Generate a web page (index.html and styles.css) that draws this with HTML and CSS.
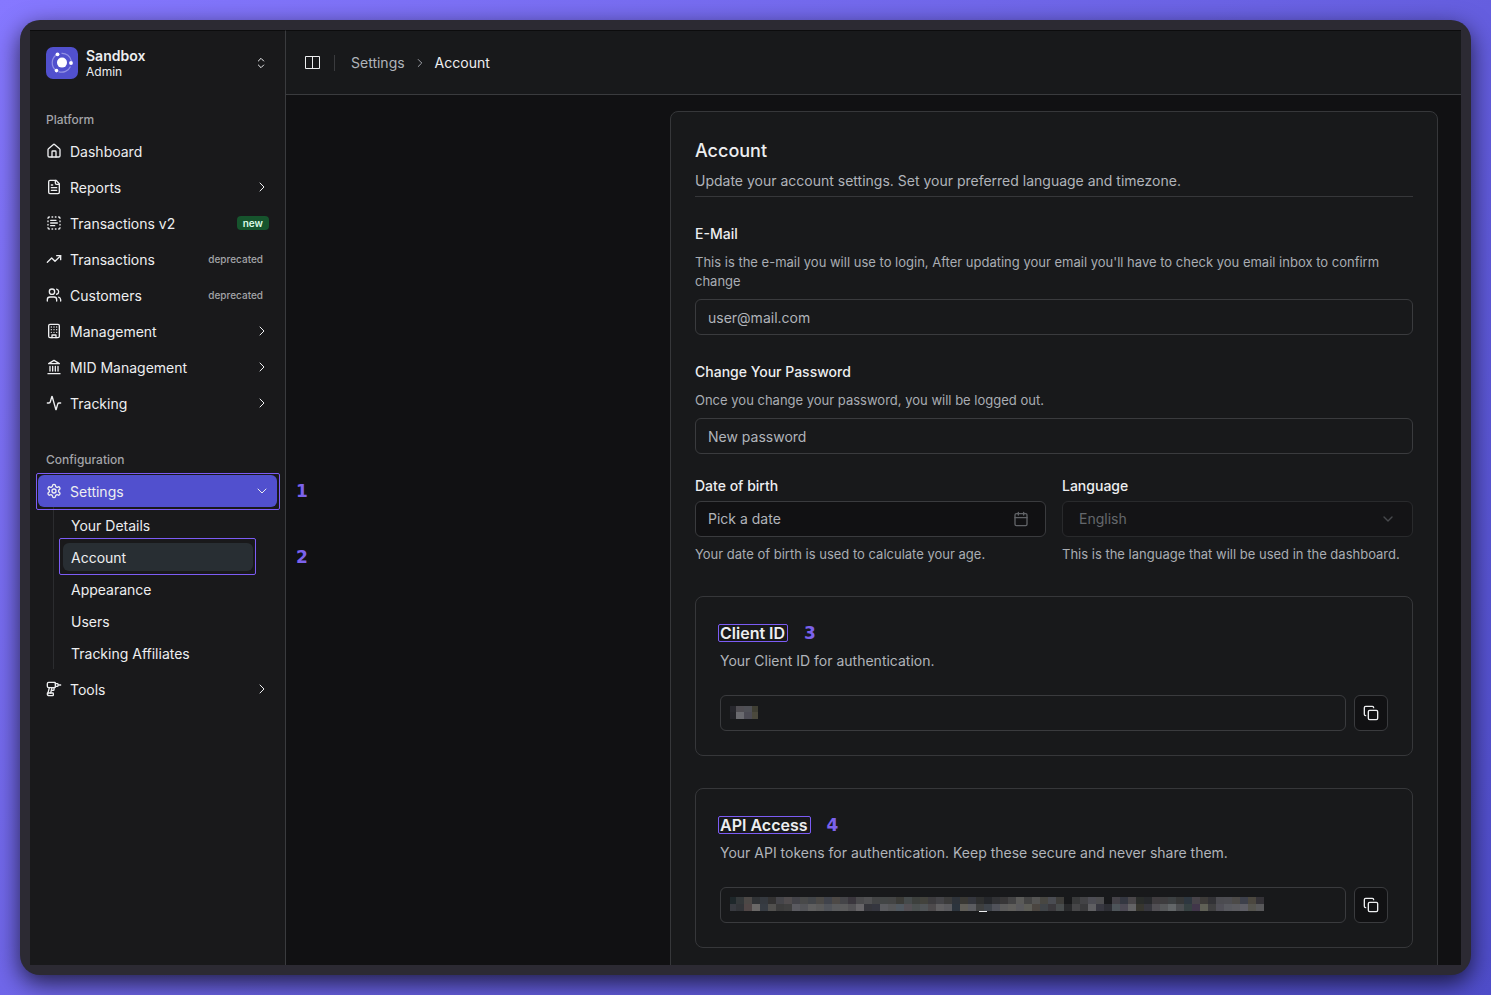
FILE: index.html
```
<!DOCTYPE html>
<html lang="en">
<head>
  <meta charset="UTF-8">
  <title>Account settings</title>
  <link rel="stylesheet" href="styles.css">
</head>
<body>

<div class="window">
  <aside class="sidebar">
    <button type="button" class="team">
      <svg class="logo" viewBox="0 0 32 32">
        <rect width="32" height="32" rx="7" fill="#5150ce"/>
        <g fill="none" stroke="#9291e4" stroke-width="1.2">
          <path d="M15.5 6.3A9.6 9.6 0 0 1 25.4 14"/>
          <path d="M9.8 8.2A9.6 9.6 0 0 0 9.4 22.8"/>
          <path d="M12.5 24.6A9.6 9.6 0 0 0 24.5 19.5"/>
        </g>
        <g fill="#fff">
          <circle cx="16" cy="15.6" r="5"/>
          <circle cx="11.5" cy="7.3" r="1.9"/>
          <circle cx="25" cy="16" r="1.9"/>
          <circle cx="10.5" cy="23.6" r="1.8"/>
        </g>
      </svg>
      <span class="team-text">
        <strong>Sandbox</strong>
        <small>Admin</small>
      </span>
      <svg class="icon chevron" viewBox="0 0 24 24"><path d="m8 9 4-4 4 4M8 15l4 4 4-4"/></svg>
    </button>

    <nav class="group">
      <h2>Platform</h2>
      <ul class="menu">
        <li><a href="#" class="item">
          <svg class="icon" viewBox="0 0 24 24"><path d="M15 21v-8a1 1 0 0 0-1-1h-4a1 1 0 0 0-1 1v8"/><path d="M3 10a2 2 0 0 1 .709-1.528l7-6a2 2 0 0 1 2.582 0l7 6A2 2 0 0 1 21 10v9a2 2 0 0 1-2 2H5a2 2 0 0 1-2-2z"/></svg>
          <span>Dashboard</span>
        </a></li>
        <li><a href="#" class="item">
          <svg class="icon" viewBox="0 0 24 24"><path d="M15 2H6a2 2 0 0 0-2 2v16a2 2 0 0 0 2 2h12a2 2 0 0 0 2-2V7Z"/><path d="M14 2v4a2 2 0 0 0 2 2h4M10 9H8M16 13H8M16 17H8"/></svg>
          <span>Reports</span>
          <svg class="icon chevron" viewBox="0 0 24 24"><path d="m9 18 6-6-6-6"/></svg>
        </a></li>
        <li><a href="#" class="item">
          <svg class="icon" viewBox="0 0 24 24"><path d="M5 3a2 2 0 0 0-2 2M19 3a2 2 0 0 1 2 2M21 19a2 2 0 0 1-2 2M5 21a2 2 0 0 1-2-2M9 3h1M9 21h1M14 3h1M14 21h1M3 9v1M21 9v1M3 14v1M21 14v1M7 8h8M7 12h10M7 16h6"/></svg>
          <span>Transactions v2</span>
          <em class="badge badge-new">new</em>
        </a></li>
        <li><a href="#" class="item">
          <svg class="icon" viewBox="0 0 24 24"><path d="m22 7-8.5 8.5-5-5L2 17"/><path d="M16 7h6v6"/></svg>
          <span>Transactions</span>
          <em class="badge">deprecated</em>
        </a></li>
        <li><a href="#" class="item">
          <svg class="icon" viewBox="0 0 24 24"><path d="M16 21v-2a4 4 0 0 0-4-4H6a4 4 0 0 0-4 4v2"/><circle cx="9" cy="7" r="4"/><path d="M22 21v-2a4 4 0 0 0-3-3.87M16 3.13a4 4 0 0 1 0 7.75"/></svg>
          <span>Customers</span>
          <em class="badge">deprecated</em>
        </a></li>
        <li><a href="#" class="item">
          <svg class="icon" viewBox="0 0 24 24"><rect x="4" y="2" width="16" height="20" rx="2"/><path d="M9 22v-4h6v4M8 6h.01M16 6h.01M12 6h.01M12 10h.01M12 14h.01M16 10h.01M16 14h.01M8 10h.01M8 14h.01"/></svg>
          <span>Management</span>
          <svg class="icon chevron" viewBox="0 0 24 24"><path d="m9 18 6-6-6-6"/></svg>
        </a></li>
        <li><a href="#" class="item">
          <svg class="icon" viewBox="0 0 24 24"><path d="M3 22h18M6 18v-7M10 18v-7M14 18v-7M18 18v-7M12 2l8 5H4z"/></svg>
          <span>MID Management</span>
          <svg class="icon chevron" viewBox="0 0 24 24"><path d="m9 18 6-6-6-6"/></svg>
        </a></li>
        <li><a href="#" class="item">
          <svg class="icon" viewBox="0 0 24 24"><path d="M22 12h-2.48a2 2 0 0 0-1.93 1.46l-2.35 8.36a.25.25 0 0 1-.48 0L9.24 2.18a.25.25 0 0 0-.48 0l-2.35 8.36A2 2 0 0 1 4.49 12H2"/></svg>
          <span>Tracking</span>
          <svg class="icon chevron" viewBox="0 0 24 24"><path d="m9 18 6-6-6-6"/></svg>
        </a></li>
      </ul>
    </nav>

    <nav class="group">
      <h2>Configuration</h2>
      <ul class="menu">
        <li>
          <a href="#" class="item item-open mark mark-menu">
            <svg class="icon" viewBox="0 0 24 24"><path d="M12.22 2h-.44a2 2 0 0 0-2 2v.18a2 2 0 0 1-1 1.73l-.43.25a2 2 0 0 1-2 0l-.15-.08a2 2 0 0 0-2.73.73l-.22.38a2 2 0 0 0 .73 2.73l.15.1a2 2 0 0 1 1 1.72v.51a2 2 0 0 1-1 1.74l-.15.09a2 2 0 0 0-.73 2.73l.22.38a2 2 0 0 0 2.73.73l.15-.08a2 2 0 0 1 2 0l.43.25a2 2 0 0 1 1 1.73V20a2 2 0 0 0 2 2h.44a2 2 0 0 0 2-2v-.18a2 2 0 0 1 1-1.73l.43-.25a2 2 0 0 1 2 0l.15.08a2 2 0 0 0 2.73-.73l.22-.39a2 2 0 0 0-.73-2.73l-.15-.08a2 2 0 0 1-1-1.74v-.5a2 2 0 0 1 1-1.74l.15-.09a2 2 0 0 0 .73-2.73l-.22-.38a2 2 0 0 0-2.73-.73l-.15.08a2 2 0 0 1-2 0l-.43-.25a2 2 0 0 1-1-1.73V4a2 2 0 0 0-2-2z"/><circle cx="12" cy="12" r="3"/></svg>
            <span>Settings</span>
            <svg class="icon chevron" viewBox="0 0 24 24"><path d="m6 9 6 6 6-6"/></svg>
            <b class="step">1</b>
          </a>
          <ul class="submenu">
            <li><a href="#">Your Details</a></li>
            <li><a href="#" class="current mark mark-submenu">Account<b class="step">2</b></a></li>
            <li><a href="#">Appearance</a></li>
            <li><a href="#">Users</a></li>
            <li><a href="#">Tracking Affiliates</a></li>
          </ul>
        </li>
        <li><a href="#" class="item">
          <svg class="icon" viewBox="0 0 24 24"><path d="M14 9c0 .6-.4 1-1 1H4c-1.100 0-2-.9-2-2V4c0-1.100.9-2 2-2h9c.6 0 1 .4 1 1Z"/><path d="M18 6h4M14 4h3a1 1 0 0 1 1 1v2a1 1 0 0 1-1 1h-3M5 10l-2 8M12 10v3c0 .6-.4 1-1 1H8M7 18l2-8"/><path d="M5 22c-1.700 0-3-1.300-3-3 0-.6.4-1 1-1h7c.6 0 1 .4 1 1v2c0 .6-.4 1-1 1Z"/></svg>
          <span>Tools</span>
          <svg class="icon chevron" viewBox="0 0 24 24"><path d="m9 18 6-6-6-6"/></svg>
        </a></li>
      </ul>
    </nav>
  </aside>

  <div class="page">
    <header class="topbar">
      <button type="button" class="toggle" aria-label="Toggle sidebar">
        <svg viewBox="0 0 15 15"><path d="M.5 1.500h14v12H.5zM7.500 1.500v12"/></svg>
      </button>
      <nav class="breadcrumb">
        <a href="#">Settings</a>
        <svg class="icon chevron" viewBox="0 0 24 24"><path d="m9 18 6-6-6-6"/></svg>
        <span>Account</span>
      </nav>
    </header>

    <main class="content">
      <form class="card">
        <div class="card-header">
          <h1>Account</h1>
          <p>Update your account settings. Set your preferred language and timezone.</p>
        </div>

        <div class="field">
          <label for="email">E-Mail</label>
          <p class="help">This is the e-mail you will use to login, After updating your email you'll have to check you email inbox to confirm change</p>
          <input type="email" id="email" name="email" placeholder="user@mail.com">
        </div>

        <div class="field">
          <label for="password">Change Your Password</label>
          <p class="help">Once you change your password, you will be logged out.</p>
          <input type="password" id="password" name="password" placeholder="New password">
        </div>

        <div class="row">
          <div class="column">
            <label for="birth">Date of birth</label>
            <button type="button" id="birth" class="picker">
              Pick a date
              <svg class="icon" viewBox="0 0 24 24"><path d="M8 2v4M16 2v4M3 10h18"/><rect x="3" y="4" width="18" height="18" rx="2"/></svg>
            </button>
            <p class="help">Your date of birth is used to calculate your age.</p>
          </div>
          <div class="column">
            <label for="language">Language</label>
            <div class="select">
              <select id="language" name="language" disabled>
                <option>English</option>
              </select>
              <svg class="icon" viewBox="0 0 24 24"><path d="m6 9 6 6 6-6"/></svg>
            </div>
            <p class="help">This is the language that will be used in the dashboard.</p>
          </div>
        </div>

        <section class="box">
          <h3><label for="client-id" class="mark mark-title">Client ID<b class="step">3</b></label></h3>
          <p>Your Client ID for authentication.</p>
          <div class="secret">
            <div class="secret-value">
              <input type="text" id="client-id" readonly>
              <svg class="mosaic" id="client-mosaic"></svg>
            </div>
            <button type="button" class="copy" aria-label="Copy client ID">
              <svg class="icon" viewBox="0 0 24 24"><rect x="8" y="8" width="14" height="14" rx="2"/><path d="M4 16c-1.100 0-2-.9-2-2V4c0-1.100.9-2 2-2h10c1.100 0 2 .9 2 2"/></svg>
            </button>
          </div>
        </section>

        <section class="box">
          <h3><label for="token" class="mark mark-title">API Access<b class="step">4</b></label></h3>
          <p>Your API tokens for authentication. Keep these secure and never share them.</p>
          <div class="secret">
            <div class="secret-value">
              <input type="text" id="token" readonly>
              <svg class="mosaic" id="token-mosaic"></svg>
            </div>
            <button type="button" class="copy" aria-label="Copy API token">
              <svg class="icon" viewBox="0 0 24 24"><rect x="8" y="8" width="14" height="14" rx="2"/><path d="M4 16c-1.100 0-2-.9-2-2V4c0-1.100.9-2 2-2h10c1.100 0 2 .9 2 2"/></svg>
            </button>
          </div>
        </section>
      </form>
    </main>
  </div>
</div>

<script src="mosaic.js"></script>
</body>
</html>
```
FILE: styles.css
```
* {
  box-sizing: border-box;
}

body {
  height: 100vh;
  margin: 0;
  padding: 20px;
  overflow: hidden;
  font-family: Inter, sans-serif;
  font-size: 14px;
  line-height: 20px;
  color: #edeef0;
  background: linear-gradient(135deg, #8678ff, #4f4dca);
}

h1, h2, h3, p, ul {
  margin: 0;
  padding: 0;
}

ul {
  list-style: none;
}

a {
  color: inherit;
  text-decoration: none;
}

button, input, select {
  font: inherit;
  color: inherit;
}

button {
  cursor: pointer;
}

.window {
  display: flex;
  height: 100%;
  padding: 10px;
  background-color: #2c2a33;
  border-radius: 20px;
  box-shadow: 0 8px 24px rgba(0, 0, 0, 0.7);
}

.icon {
  flex: none;
  width: 16px;
  height: 16px;
  fill: none;
  stroke: currentColor;
  stroke-width: 2;
  stroke-linecap: round;
  stroke-linejoin: round;
}

/* sidebar */

.sidebar {
  display: flex;
  flex: none;
  flex-direction: column;
  gap: 8px;
  width: 256px;
  overflow: visible;
  background-color: #19191b;
  border-top: 1px solid #0c0c0d;
  border-right: 1px solid #3a3b3e;
}

.team {
  display: flex;
  align-items: center;
  gap: 8px;
  height: 64px;
  margin-bottom: -8px;
  padding: 0 16px;
  text-align: left;
  background: none;
  border: none;
}

.logo {
  width: 32px;
  height: 32px;
}

.team-text {
  display: flex;
  flex: 1;
  flex-direction: column;
  padding-top: 2px;
}

.team-text strong {
  font-weight: 600;
  line-height: 16px;
}

.team-text small {
  font-size: 12px;
  line-height: 16px;
}

.group {
  padding: 8px;
}

.group h2 {
  height: 32px;
  padding: 0 8px;
  font-size: 12px;
  font-weight: 500;
  line-height: 34px;
  color: #a3a4a8;
}

.menu {
  display: flex;
  flex-direction: column;
  gap: 4px;
}

.item {
  display: flex;
  align-items: center;
  gap: 8px;
  height: 32px;
  padding: 0 8px;
  border-radius: 6px;
}

.item span {
  flex: 1;
  padding-top: 2px;
}

.chevron {
  stroke-width: 1.5;
}

.item .chevron {
  margin-right: -1px;
}

.item-open {
  background-color: #5150ce;
}

.badge {
  padding: 0 6px;
  font-size: 10px;
  font-style: normal;
  font-weight: 500;
  line-height: 14px;
  color: #a3a4a8;
  border-radius: 4px;
}

.badge-new {
  font-weight: 600;
  color: #dcfce7;
  background-color: #16542d;
}

.submenu {
  display: flex;
  flex-direction: column;
  gap: 4px;
  margin: 0 24px 0 15px;
  padding: 4px 0 2px 9px;
  border-left: 1px solid #2b2c2f;
}

.submenu a {
  display: block;
  height: 28px;
  padding: 0 8px;
  line-height: 30px;
  border-radius: 6px;
}

.submenu .current {
  background-color: #282e33;
}

/* numbered outlines */

.mark {
  position: relative;
}

.mark::after {
  content: "";
  position: absolute;
  border: 1px solid #7c5cf5;
  border-radius: 2px;
}

.mark-menu::after {
  inset: -2px -3px -3px -2px;
}

.mark-submenu::after {
  inset: -5px -3px -4px -4px;
}

.mark-title::after {
  inset: 3px -3px 3px -2px;
}

.step {
  position: absolute;
  top: 50%;
  left: calc(100% + 19px);
  font-family: "DejaVu Sans", sans-serif;
  font-size: 17px;
  font-weight: bold;
  line-height: 22px;
  color: #7c62ec;
  transform: translateY(-50%);
}

.mark-submenu .step {
  left: calc(100% + 43px);
}

/* page */

.page {
  display: flex;
  flex: 1;
  flex-direction: column;
  min-width: 0;
  overflow: hidden;
  background-color: #111113;
}

/* keeps the step numbers above the page */
.sidebar {
  position: relative;
  z-index: 1;
}

.topbar {
  display: flex;
  flex: none;
  align-items: center;
  height: 65px;
  padding-left: 19px;
  background-color: #18191b;
  border-top: 1px solid #0c0c0d;
  border-bottom: 1px solid #3a3b3e;
}

.toggle {
  display: flex;
  padding: 0;
  background: none;
  border: none;
}

.toggle svg {
  width: 15px;
  height: 15px;
  fill: none;
  stroke: currentColor;
}

.breadcrumb {
  display: flex;
  align-items: center;
  gap: 8px;
  height: 16px;
  margin-left: 14px;
  padding-left: 16px;
  border-left: 1px solid #3a3b3e;
}

.breadcrumb a {
  color: #b0b4ba;
}

.breadcrumb .icon {
  width: 14px;
  height: 14px;
  color: #b0b4ba;
}

.content {
  padding: 16px 23px;
}

.card {
  max-width: 768px;
  margin-left: auto;
  padding: 24px;
  background-color: #18191b;
  border: 1px solid #36373a;
  border-radius: 8px;
}

.card-header {
  margin-bottom: 27px;
  padding-bottom: 5px;
  border-bottom: 1px solid #36373a;
}

.card-header h1 {
  margin-bottom: 5px;
  font-size: 18px;
  font-weight: 500;
  line-height: 30px;
}

.card-header p, .box p {
  color: #b0b4ba;
}

.field {
  display: flex;
  flex-direction: column;
  margin-bottom: 27px;
}

.field .help {
  margin: 9px 0 8px;
}

label {
  font-weight: 500;
}

.help {
  font-size: 13px;
  line-height: 19px;
  color: #a9adb3;
}

input, .picker, select {
  width: 100%;
  height: 36px;
  padding: 0 12px;
  background-color: transparent;
  border: 1px solid #3a3b3e;
  border-radius: 6px;
  outline: none;
}

input::placeholder {
  color: #b0b4ba;
  opacity: 1;
}

.row {
  display: grid;
  grid-template-columns: 1fr 1fr;
  gap: 16px;
  margin-top: -5px;
}

.column label {
  display: block;
  margin-bottom: 5px;
}

.column .help {
  margin-top: 8px;
}

.picker {
  display: flex;
  align-items: center;
  justify-content: space-between;
  padding-right: 16px;
  color: #b0b4ba;
  background-color: #111113;
}

.picker .icon {
  opacity: 0.5;
}

.select {
  position: relative;
  opacity: 0.5;
}

.select select {
  display: block;
  padding: 0 16px;
  color: #b0b4ba;
  background-color: #111113;
  appearance: none;
  opacity: 1;
}

.select .icon {
  position: absolute;
  top: 10px;
  right: 17px;
  color: #77797e;
}

.box {
  margin-top: 32px;
  padding: 24px;
  border: 1px solid #36373a;
  border-radius: 8px;
}

.box h3 {
  margin-bottom: 6px;
  font-size: 16px;
  line-height: 24px;
}

.box h3 label {
  display: inline-block;
  font-weight: 600;
}

.secret {
  display: flex;
  gap: 8px;
  margin-top: 24px;
}

.secret-value {
  position: relative;
  flex: 1;
}

.secret-value input {
  display: block;
}

.mosaic {
  position: absolute;
  top: 10px;
  left: 10px;
  width: 534px;
  height: 16px;
  pointer-events: none;
}

.copy {
  display: flex;
  align-items: center;
  justify-content: center;
  width: 34px;
  height: 36px;
  padding: 0;
  background-color: #111113;
  border: 1px solid #3a3b3e;
  border-radius: 6px;
}
```
FILE: mosaic.js
```
const CELL = 8;

function addRect(svg, x, y, width, height, color) {
  const rect = document.createElementNS("http://www.w3.org/2000/svg", "rect");
  rect.setAttribute("x", x);
  rect.setAttribute("y", y);
  rect.setAttribute("width", width);
  rect.setAttribute("height", height);
  rect.setAttribute("fill", color);
  svg.appendChild(rect);
}

// the first cell of each row is cut to 6px
function drawRow(svg, y, colors) {
  colors.split(" ").forEach((color, i) => {
    const x = i === 0 ? 0 : i * CELL - 2;
    addRect(svg, x, y, i === 0 ? 6 : CELL, 7, "#" + color);
  });
}

const client = document.getElementById("client-mosaic");
drawRow(client, 1, "27272d 504e53 4f5056");
addRect(client, 22, 1, 6, 7, "#403f34");
drawRow(client, 7, "242429 6a6a6f 4c4b54");
addRect(client, 22, 7, 6, 7, "#4b493d");

const token = document.getElementById("token-mosaic");
drawRow(token, 0,
  "1e272a 34383a 4c4846 303336 35393f 333232 45454a 504c4e 434349 484949 424549 4b4946 40434b 4d4946 444448 3a363d " +
  "4a4a4c 505052 434445 424545 434444 3b3b37 454a4b 3d403d 42423c 3c3b3e 434347 3b3b3b 2e333a 393834 34363d 2e2f2f " +
  "25272b 313235 373637 434344 5a5a58 444444 545453 484742 4a4c52 3e3d3a 18191b 38393a 434346 4d4d54 4d4d4f 18191b " +
  "434147 343741 494649 292c2a 27292c 3f3c3f 3d3c3e 3c4042 363737 2e3740 474349 3d3b39 323236 4b4b50 4c4c51 4c4a48 " +
  "3d404b 4b473f 343237");
drawRow(token, 7,
  "383a40 323438 504646 6a6867 373c43 51504e 3c3c3c 3f3f3f 5a5a60 535458 5f5f5f 5a5a5a 51545a 5a5b5d 5b5b5c 535255 " +
  "676568 35353b 35363f 5a5b5f 555658 505860 545055 4b5050 505457 4d4a4c 605f61 5a5a5e 2c343d 605e58 5b5c60 3e3f3f " +
  "3e434a 50525a 5b5b5b 605f5c 59595c 5d5d57 4b4641 404448 3b393d 484c4d 28292b 464648 3a3a3c 5f5f62 373740 2d2e34 " +
  "4d5459 4c4954 636365 37362f 37373e 514f54 56585a 626668 4b4d50 364142 41364a 5f6056 3f3f40 504f57 58595f 5b5b60 " +
  "5e5e66 55544e 58585a");
addRect(token, 249, 14, 8, 1, "#edeef0");
```
